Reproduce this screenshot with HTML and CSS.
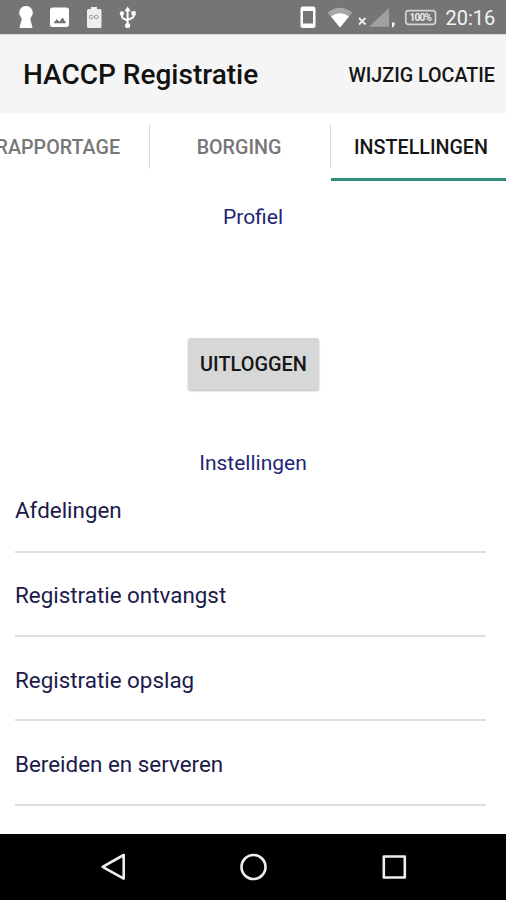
FILE: index.html
```
<!DOCTYPE html>
<html lang="nl">
<head>
<meta charset="utf-8">
<title>HACCP Registratie</title>
<link rel="stylesheet" href="styles.css">
</head>
<body>
<div class="phone">
  <div class="status">
    <svg class="status-left" width="160" height="34" viewBox="0 0 160 34">
      <path fill="#fff" d="M26 6a6.700 6.700 0 0 0-5.200 11c.8 1 .9 1.900.7 3L19.600 27q-.2 1 .6 1h11.600q.8 0 .6-1l-1.900-7c-.2-1.100-.1-2 .7-3A6.700 6.700 0 0 0 26 6z"/>
      <rect x="50" y="7.500" width="19" height="19.500" rx="2.500" fill="#fff"/>
      <path fill="#707070" d="M53.500 23.300l3.200-4.300 2.500 2.800 3.500-4.300 3.500 5.800z"/>
      <path fill="#eee" d="M91 7h6v2h3q1.500 0 1.500 1.500v16q0 1.500-1.500 1.500H88.500Q87 28 87 26.500v-16Q87 9 88.500 9H91z"/>
      <g fill="none" stroke="#999" stroke-width="1"><circle cx="91.300" cy="17" r="1.800"/><circle cx="96.300" cy="17" r="1.800"/></g>
      <g fill="none" stroke="#fff" stroke-width="2"><path d="M127.600 10v15M121.900 13.500V16q0 2 1.700 2.700l4 2M133.700 13v2.800q0 1.400-1.500 2.100l-4.600 2.300"/></g>
      <path fill="#fff" d="M127.600 6.500l3.200 4.700h-6.400zM131.500 11.300h4.200v4h-4.200z"/><circle cx="121.900" cy="13.500" r="2.200" fill="#fff"/><circle cx="127.600" cy="25.500" r="2.600" fill="#fff"/>
    </svg>
    <svg class="status-right" width="140" height="34" viewBox="298 0 140 34">
      <path fill="#fff" fill-rule="evenodd" d="M302.500 6.500h11q2 0 2 2v17.500q0 2-2 2h-11q-2 0-2-2V8.500q0-2 2-2zM303 11v12.500h10V11z"/>
      <path fill="#a7a7a7" d="M327.500 12.600q12.400-9.500 24.800 0L340 27.500z"/>
      <path fill="#fff" d="M331 16.600q9-6.500 18 0L340 27.500z"/>
      <path stroke="#eee" stroke-width="1.800" d="M359 18l6.500 6.500M365.500 18l-6.500 6.500"/>
      <path fill="#a0a0a0" d="M389 8v18.800h-20z"/>
      <path fill="#fff" d="M392 22.500h2.500v2.200l-1.200 2.500h-1.200z"/>
      <rect x="405.800" y="10.600" width="29.700" height="13.800" rx="2.800" fill="none" stroke="#d4d4d4" stroke-width="1.700"/>
      <text class="charge" x="409.500" y="21.200" textLength="22.500">100%</text>
    </svg>
    <span class="clock">20:16</span>
  </div>
  <header class="appbar">
    <h1>HACCP Registratie</h1>
    <span class="location">WIJZIG LOCATIE</span>
  </header>
  <nav class="tabs">
    <span class="tab tab-report">RAPPORTAGE</span>
    <span class="tab tab-assure">BORGING</span>
    <span class="tab tab-active">INSTELLINGEN</span>
  </nav>
  <main class="content">
    <h2 class="profile">Profiel</h2>
    <button class="logout">UITLOGGEN</button>
    <h2 class="settings">Instellingen</h2>
    <ul class="list">
      <li>Afdelingen</li>
      <li>Registratie ontvangst</li>
      <li>Registratie opslag</li>
      <li>Bereiden en serveren</li>
    </ul>
  </main>
  <footer class="navbar">
    <svg width="506" height="66" viewBox="0 834 506 66" fill="none" stroke="#eee" stroke-width="2.600" stroke-linejoin="round">
      <path d="M123.700 855v23.600L102.600 866.800z"/>
      <circle cx="253.500" cy="867" r="12"/>
      <rect x="383.800" y="856.500" width="21" height="21"/>
    </svg>
  </footer>
</div>
</body>
</html>
```

FILE: styles.css
```
* { box-sizing: border-box; }
body { margin: 0; font-family: Roboto, "Liberation Sans", sans-serif; background: #fff; }
h1, h2, ul { margin: 0; padding: 0; font-weight: 400; }
.phone { width: 506px; height: 900px; display: flex; flex-direction: column; overflow: hidden; }
.status { height: 34px; background: #757575; display: flex; align-items: center; flex: none; }
.status svg { display: block; flex: none; }
.status-right { margin-left: 138px; }
.charge { font-size: 10px; font-weight: 700; fill: #eee; }
.clock { margin-left: 7.500px; margin-top: 2px; font-size: 20px; line-height: 24px; color: #f4f4f4; }
.appbar { height: 79px; flex: none; background: #f5f5f5; border-top: 1px solid #d6d6d6; padding: 2px 11px 0 23px; display: flex; align-items: center; justify-content: space-between; white-space: nowrap; }
.appbar h1 { font-size: 28px; line-height: 32px; font-weight: 500; color: #111; }
.location { font-size: 19.700px; font-weight: 500; color: #161616; }
.tabs { height: 68px; flex: none; display: grid; grid-template-columns: 149px 182px 175px; white-space: nowrap; }
.tab { display: flex; align-items: center; justify-content: center; padding-top: 1px; font-size: 19.700px; font-weight: 500; color: #777; position: relative; }
.tab-assure { padding-right: 2px; }
.tab-report { justify-content: flex-end; padding-right: 29px; }
.tab-active { color: #161616; border-bottom: 3px solid #2d8f7b; padding: 4px 0 0 5px; }
.tab-report::after, .tab-assure::after { content: ""; position: absolute; right: -1px; top: 11px; width: 1.500px; height: 45px; background: #dcdcdc; }
.tab-assure::after { right: 0; }
.content { flex: 1; display: flex; flex-direction: column; align-items: center; min-height: 0; }
.content h2 { font-size: 21px; line-height: 26px; color: #1c2775; }
.profile { margin-top: 23px; }
.logout { margin: 108px 0 0 1px; width: 131px; height: 52px; flex: none; border: 0; border-radius: 3px; padding: 0; background: #d6d8d7; box-shadow: 0 1px 2px #0004; font: 500 19.900px Roboto, sans-serif; color: #161616; }
.content .settings { margin-top: 60px; }
.list { list-style: none; width: 471px; margin-left: -5px; }
.list li { height: 84.400px; border-bottom: 2px solid #dedede; display: flex; align-items: center; font-size: 22.400px; color: #1b1b4b; padding: 3px 0 0 0; }
.list li:first-child { height: 76.500px; padding: 0 0 6px 0; }
.navbar { height: 66px; flex: none; background: #000; }
.navbar svg { display: block; }
```
